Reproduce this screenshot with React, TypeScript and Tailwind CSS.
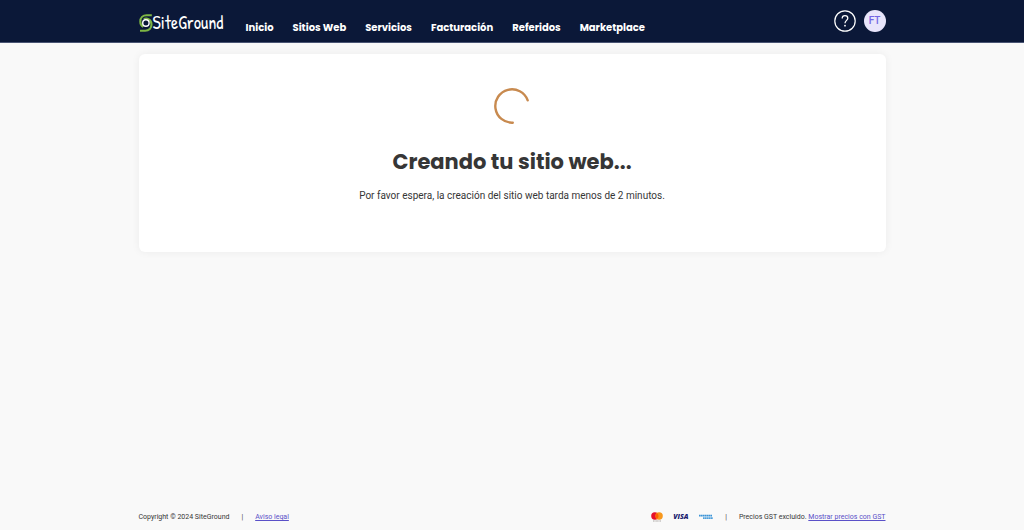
const navItems = ['Inicio', 'Sitios Web', 'Servicios', 'Facturación', 'Referidos', 'Marketplace'];

function Logo() {
  return (
    <a href="#" aria-label="SiteGround" className="flex items-center text-white">
      <svg viewBox="0 0 14 18" className="h-[18px] w-[14px] shrink-0" fill="none" aria-hidden="true">
        <path d="M12.8 1.3H7.6C3.8 1.3 1.3 3.8 1.3 7.4c0 2.4 1 4.4 3 5.4" stroke="#7db544" strokeWidth="2.1" />
        <path d="M1 16.7h5.2c3.8 0 6.3-2.5 6.3-6.1 0-2.4-1-4.4-3-5.4-1.4-.8-3.4-.8-4.6 0" stroke="#7db544" strokeWidth="2.1" />
        <circle cx="6.9" cy="9" r="3.2" fill="#0b1838" stroke="#fff" strokeWidth="1.4" />
      </svg>
      <span className="font-['Patrick_Hand','Roboto_Condensed',Lato,sans-serif] text-[18px] leading-5">SiteGround</span>
    </a>
  );
}

function Header() {
  return (
    <header className="border-b border-[#4a5574] bg-[#0b1838] px-4">
      <div className="mx-auto flex h-[42px] max-w-[747px] items-start">
        <div className="w-[107px] shrink-0 pt-[13px]">
          <Logo />
        </div>
        <nav className="flex gap-[19px] pt-5 font-[Poppins,Inter,sans-serif] text-[10px] leading-4 font-bold text-white">
          {navItems.map((item) => (
            <a key={item} href="#" className="whitespace-nowrap">
              {item}
            </a>
          ))}
        </nav>
        <div className="ml-auto flex gap-2 pt-[10px]">
          <button type="button" aria-label="Ayuda" className="size-[22px]">
            <svg viewBox="0 0 22 22" fill="none" stroke="#fff" className="size-[22px]" aria-hidden="true">
              <circle cx="11" cy="11" r="10.2" strokeWidth="1.2" />
              <path d="M8.2 8.4c0-1.7 1.2-2.8 2.8-2.8s2.8 1.1 2.8 2.6c0 2.1-2.8 2.3-2.8 5" strokeWidth="1.3" />
              <circle cx="11" cy="15.7" r=".9" fill="#fff" stroke="none" />
            </svg>
          </button>
          <button type="button" className="size-[22px] rounded-full bg-[#e8e5fb] text-[10px] leading-[22px] font-medium text-[#7265e3]">
            FT
          </button>
        </div>
      </div>
    </header>
  );
}

function Spinner() {
  return (
    <svg viewBox="0 0 36 36" fill="none" className="size-9" role="status" aria-label="Cargando">
      <path d="M18.8 34.7A16.7 16.7 0 1 1 33.7 12.3" stroke="#c88a4f" strokeWidth="2.4" strokeLinecap="round" />
    </svg>
  );
}

function Payments() {
  return (
    <div className="flex items-center">
      <svg viewBox="0 0 12 10" className="h-[10px] w-3" role="img" aria-label="Mastercard">
        <circle cx="3.9" cy="4" r="3.7" fill="#e5102a" />
        <circle cx="8.1" cy="4" r="3.7" fill="#f7981d" />
        <path d="M6 1a3.7 3.7 0 0 1 0 6 3.7 3.7 0 0 1 0-6Z" fill="#ff5f00" />
        <path d="M2 9h8" stroke="#77706c" strokeWidth=".6" strokeDasharray="1 .4" />
      </svg>
      <span className="ml-[10px] w-4 font-['Open_Sans',sans-serif] text-[7px] leading-[10px] font-extrabold text-[#1c2270] italic">VISA</span>
      <svg viewBox="0 0 14 6" className="ml-[10px] h-[6px] w-[14px]" role="img" aria-label="American Express">
        <path d="M0 1.6h13" stroke="#3b94d8" strokeWidth="1.6" strokeDasharray="1.7 .3" />
        <path d="M4 4.2h10" stroke="#4d9fdc" strokeWidth="1.8" strokeDasharray="1.7 .3" />
      </svg>
    </div>
  );
}

export default function App() {
  return (
    <div className="flex min-h-screen flex-col bg-[#f9f9f9] font-[Roboto,sans-serif] text-[#363636]">
      <Header />
      <main className="flex-1 px-4 pt-[11px]">
        <section className="mx-auto flex max-w-[747px] flex-col items-center rounded-md bg-white px-4 pt-[34px] pb-12 shadow-[0_0_8px_rgba(0,0,0,0.06)]">
          <Spinner />
          <h1 className="mt-5 font-[Poppins,Inter,sans-serif] text-[21px] leading-9 font-bold">Creando tu sitio web...</h1>
          <p className="mt-2 text-[10px] leading-4">Por favor espera, la creación del sitio web tarda menos de 2 minutos.</p>
        </section>
      </main>
      <footer className="px-4 pb-2 text-[7px] leading-[10px]">
        <div className="mx-auto flex max-w-[747px] items-center justify-between">
          <div className="flex gap-3">
            <span>Copyright © 2024 SiteGround</span>
            <span>|</span>
            <a href="#" className="text-[#5a50c8] underline">
              Aviso legal
            </a>
          </div>
          <div className="flex items-center gap-3">
            <Payments />
            <span>|</span>
            <p>
              Precios GST excluido.{' '}
              <a href="#" className="text-[#5a50c8] underline">
                Mostrar precios con GST
              </a>
            </p>
          </div>
        </div>
      </footer>
    </div>
  );
}
